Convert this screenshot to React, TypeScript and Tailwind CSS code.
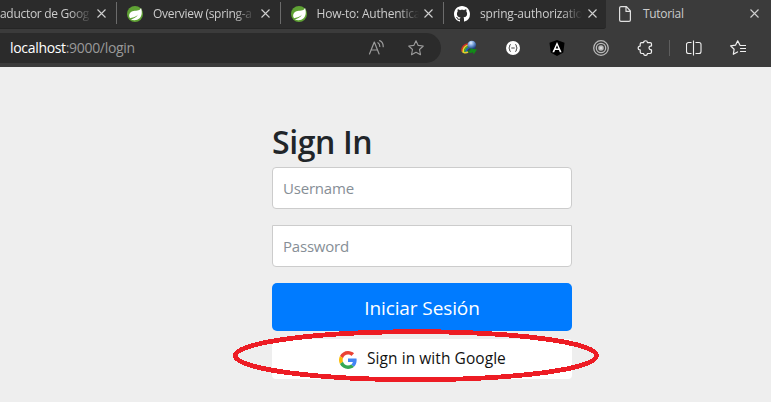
import type { ReactNode } from 'react';

const Close = () => (
  <svg className="h-[9px] w-[9px] shrink-0" viewBox="0 0 9 9" fill="none" stroke="#cfcfcf" strokeWidth="1.1">
    <path d="M.5 .5 8.5 8.5M8.5 .5 .5 8.5" />
  </svg>
);

const Spring = () => (
  <svg className="h-4 w-4" viewBox="0 0 16 16">
    <circle cx="8" cy="8" r="8" fill="#5fa134" />
    <path
      d="M14 2c-.5 1.3-1.300 2-2.600 2.300C8.500 5 4.500 4.600 2.700 7.600c-.9 1.500-.7 3.500.5 4.700C5 11.800 8.500 11.500 11 8.600 9.600 11.500 6.500 13 3.900 13.400c2.600 1.200 6.500 1.100 8.700-1.100C15.200 9.600 15.200 5.500 14 2Z"
      fill="#fff"
    />
  </svg>
);

const GitHub = () => (
  <svg className="h-4 w-4" viewBox="0 0 16 16" fill="#fff">
    <path d="M8 0C3.580 0 0 3.580 0 8c0 3.540 2.290 6.530 5.470 7.590.4.070.55-.17.55-.38 0-.19-.01-.82-.01-1.490-2.010.37-2.530-.49-2.690-.94-.09-.23-.48-.94-.82-1.130-.28-.15-.68-.52-.01-.53.63-.01 1.080.58 1.230.82.720 1.210 1.870.87 2.330.66.070-.52.280-.87.510-1.070-1.780-.2-3.640-.89-3.640-3.950 0-.87.310-1.590.82-2.150-.08-.2-.36-1.020.08-2.120 0 0 .67-.21 2.200.82.640-.18 1.320-.27 2-.27s1.360.090 2 .27c1.530-1.040 2.200-.82 2.200-.82.440 1.100.160 1.920.080 2.120.510.560.820 1.270.820 2.150 0 3.070-1.870 3.750-3.650 3.950.290.250.540.730.540 1.480 0 1.070-.01 1.930-.01 2.200 0 .210.150.460.550.380A8.010 8.010 0 0 0 16 8c0-4.420-3.580-8-8-8Z" />
  </svg>
);

const Page = () => (
  <svg className="h-4 w-3" viewBox="0 0 12 16" fill="none" stroke="#e0e0e0" strokeWidth="1.2" strokeLinejoin="round">
    <path d="M2 .6h5.500L11.400 5v9a1.400 1.400 0 0 1-1.400 1.400H2A1.400 1.400 0 0 1 .6 14V2A1.400 1.400 0 0 1 2 .6ZM7 .6V5.400h4.400" />
  </svg>
);

function Tab({ icon, title, track }: { icon: ReactNode; title: string; track: string }) {
  return (
    <div className="flex h-[27px] w-[163.5px] shrink-0 items-center border-l border-[#6b6b6b] pl-[10px] [border-image:linear-gradient(to_bottom,transparent_3px,#6b6b6b_3px,#6b6b6b_23px,transparent_23px)_1]">
      <div className="flex w-[26px] shrink-0">{icon}</div>
      <div
        className={`w-[107.5px] shrink-0 whitespace-nowrap text-[12px] leading-4 text-[#cccccc] [mask-image:linear-gradient(to_right,#000_82px,transparent_102px)] ${track}`}
      >
        {title}
      </div>
      <div className="flex">
        <Close />
      </div>
    </div>
  );
}

const Star = () => (
  <svg className="h-4 w-4" viewBox="0 0 16 16" fill="none" stroke="#9b9b9b" strokeWidth="1.1" strokeLinejoin="round">
    <path d="m8 .7 2.200 4.700 5.100.6-3.800 3.500 1 5.200L8 12.200l-4.500 2.500 1-5.200L.7 6l5.100-.6Z" />
  </svg>
);

const ReadAloud = () => (
  <svg className="h-4 w-4" viewBox="0 0 16 16" fill="none" stroke="#9b9b9b" strokeWidth="1.200" strokeLinecap="round" strokeLinejoin="round">
    <path d="M1.500 14 6.300 2 11.100 14M3.200 10h6.200M9.900 2.700C11.200 3.500 11.800 4.900 11.800 6.500M11.700.6C14.200 1.700 15.300 4.100 15.200 6.700" />
  </svg>
);

const Globe = () => (
  <svg className="h-4 w-4" viewBox="0 0 16 16">
    <defs>
      <radialGradient id="globe" cx=".4" cy=".25" r=".7">
        <stop offset="0" stopColor="#e5f2ff" />
        <stop offset=".45" stopColor="#7aa3dd" />
        <stop offset="1" stopColor="#1c3f7c" />
      </radialGradient>
    </defs>
    <path d="M1 11.500C.3 7.200 3.300 4.100 7 4" stroke="#d33224" strokeWidth="1.500" fill="none" />
    <path d="M2.500 12.500C1.400 8.500 4.200 5.400 7.600 5.300" stroke="#f0d72a" strokeWidth="1.600" fill="none" />
    <path d="M4.200 13C3 10 5 7 8 6.800" stroke="#3cae3b" strokeWidth="1.600" fill="none" />
    <path d="M5.700 12.500C5 10.500 6 8.500 8 8.200" stroke="#1c61c9" strokeWidth="1.600" fill="none" />
    <path d="M.5 11.300c1.500 2.300 4.300 3 7 1.500l-1-1.600c-1.700 1-3.700.8-6 .1Z" fill="#e0cf2c" />
    <circle cx="10.800" cy="5.100" r="4.400" fill="url(#globe)" />
    <path d="M6.500 10.500c1.600.5 2.700 0 3.300-.8L8.300 8.200l7.700 1.400-3.300 4.800-.8-2.200c-2 1.300-4.400.8-5.400-1.700Z" fill="#128a18" />
  </svg>
);

const Braces = () => (
  <svg className="h-[14px] w-[14px]" viewBox="0 0 14 14" fill="none">
    <circle cx="7" cy="7" r="7" fill="#fff" />
    <path d="M5 3.700H4.500Q3.600 3.700 3.600 4.600V6L2.800 7l.8 1v1.400q0 .9.900.9H5M9 3.700h.5q.9 0 .9.900V6l.8 1-.8 1v1.400q0 .9-.9.900H9M5.300 7h3.400" stroke="#333" strokeWidth=".9" />
  </svg>
);

const Angular = () => (
  <svg className="h-4 w-4" viewBox="0 0 16 16">
    <path d="m8 0 7.500 2.700-1.200 9.800L8 16l-6.300-3.500L.5 2.700Z" fill="#000" />
    <path d="M8 2 3.400 12.300h1.800L6.100 10h3.800l.9 2.300h1.800ZM8 5.300 9.300 8.500H6.700Z" fill="#fff" fillRule="evenodd" />
  </svg>
);

const Target = () => (
  <svg className="h-4 w-4" viewBox="0 0 16 16" fill="none" stroke="#b9b9b9" strokeWidth="1.300">
    <circle cx="8" cy="8" r="7.300" />
    <circle cx="8" cy="8" r="4.700" />
    <circle cx="8" cy="8" r="2.100" fill="#d8d8d8" />
  </svg>
);

const Puzzle = () => (
  <svg className="h-4 w-4" viewBox="0 0 16 16" fill="none" stroke="#f0f0f0" strokeWidth="1.200" strokeLinejoin="round">
    <path d="M3.200 4Q3.200 2.600 4.600 2.600h2C6.600.1 10.400.1 10.400 2.600h2.700Q14.500 2.600 14.500 4v1.900c-3.300-.2-3.300 4.100 0 3.900v2.300Q14.500 13.500 13.100 13.500h-2.700c0 2.600-3.800 2.600-3.800 0h-2q-1.400 0-1.400-1.400V9.900C.5 9.900.5 6.100 3.200 6.100Z" />
  </svg>
);

const Split = () => (
  <svg className="h-4 w-4" viewBox="0 0 16 16" fill="none" stroke="#f0f0f0" strokeWidth="1.100">
    <path d="M5.500 2.500H2.500a2 2 0 0 0-2 2v7a2 2 0 0 0 2 2h3M9.500 2.500h3.500a2 2 0 0 1 2 2v7a2 2 0 0 1-2 2H9.500M7.500 .5v15" />
  </svg>
);

const Favorites = () => (
  <svg className="h-4 w-4" viewBox="0 0 16 16" fill="none" stroke="#f0f0f0" strokeWidth="1.200" strokeLinecap="round" strokeLinejoin="round">
    <path d="M10 5.300 7.700.8 5.500 5.200.6 5.900l3.500 3.400-.8 5 4.200-2.400M10.500 5.500h5M10.500 8.500h5M10.500 11.500h5" />
  </svg>
);

const Google = () => (
  <svg className="h-[18px] w-[18px]" viewBox="0 0 48 48">
    <path fill="#ea4335" d="M24 9.500c3.540 0 6.710 1.220 9.210 3.600l6.850-6.850C35.900 2.380 30.470 0 24 0 14.620 0 6.510 5.380 2.560 13.220l7.980 6.190C12.430 13.720 17.740 9.500 24 9.500Z" />
    <path fill="#4285f4" d="M46.980 24.550c0-1.570-.15-3.090-.38-4.550H24v9.020h12.940c-.58 2.960-2.260 5.480-4.780 7.180l7.730 6c4.510-4.180 7.090-10.360 7.090-17.650Z" />
    <path fill="#fbbc05" d="M10.530 28.590A14.500 14.500 0 0 1 9.770 24c0-1.600.27-3.140.76-4.590l-7.980-6.190A23.900 23.900 0 0 0 0 24c0 3.880.92 7.540 2.560 10.780Z" />
    <path fill="#34a853" d="M24 48c6.480 0 11.930-2.130 15.890-5.810l-7.730-6c-2.150 1.450-4.920 2.300-8.160 2.300-6.260 0-11.570-4.220-13.470-9.910l-7.980 6.190C6.510 42.620 14.620 48 24 48Z" />
  </svg>
);

export default function App() {
  return (
    <div className="relative flex h-[402px] w-[771px] flex-col overflow-hidden bg-[#eeeeee] font-['Open_Sans','Noto_Sans',sans-serif]">
      <header className="bg-[#3b3b3b]">
        <div className="flex h-[29px] items-stretch">
          <div className="flex w-[606px] overflow-hidden rounded-br-[3px] border-b border-[#252525] bg-[#2b2b2b]">
            <div className="flex h-[27px] w-[116px] shrink-0 items-center">
              <div className="w-[97px] whitespace-nowrap text-[12px] leading-4 tracking-[-0.3px] text-[#cccccc] [mask-image:linear-gradient(to_right,#000_70px,transparent_92px)]">
                aductor de Goog
              </div>
              <div className="flex"><Close /></div>
            </div>
            <Tab icon={<Spring />} title="Overview (spring-a" track="tracking-[-0.3px]" />
            <Tab icon={<Spring />} title="How-to: Authentica" track="tracking-[-0.2px]" />
            <Tab icon={<GitHub />} title="spring-authorizatio" track="tracking-[-0.2px]" />
          </div>
          <div className="flex h-[27px] flex-1 items-center pl-[13px]">
            <Page />
            <span className="ml-3 w-[107px] text-[12px] leading-4 tracking-[-0.3px] text-[#cccccc]">Tutorial</span>
            <Close />
          </div>
        </div>
        <div className="flex h-[38px] items-start pt-1">
          <div className="flex h-[30px] w-[441px] items-center rounded-r-full bg-[#2b2b2b] pl-[10px]">
            <div className="w-[358px] text-[14px] leading-5 tracking-[-0.32px] text-[#999999]">
              <span className="text-white">localhost</span>:9000/login
            </div>
            <ReadAloud />
            <div className="ml-[24px]"><Star /></div>
          </div>
          <div className="flex h-[30px] flex-1 items-center">
            <div className="ml-[20px]"><Globe /></div>
            <div className="ml-[29px]"><Braces /></div>
            <div className="ml-[29px]"><Angular /></div>
            <div className="ml-[28px]"><Target /></div>
            <div className="ml-[28px]"><Puzzle /></div>
            <div className="ml-[16px] h-4 w-px bg-[#5e5e5e]" />
            <div className="ml-[16px]"><Split /></div>
            <div className="ml-[28px]"><Favorites /></div>
          </div>
        </div>
      </header>
      <main className="ml-[272px] flex w-[300px] flex-col pt-[56px]">
        <h1 className="mb-[6px] h-[38px] text-[32px] leading-[38px] font-semibold tracking-[-0.4px] text-[#212529]">Sign In</h1>
        <input
          placeholder="Username"
          className="mb-4 h-[42px] rounded-[4px] border border-[#cccccc] bg-white px-[10px] text-[15px] tracking-[-0.2px] placeholder:text-[#868e96]"
        />
        <input
          placeholder="Password"
          className="mb-4 h-[42px] rounded-b-[4px] border border-[#cccccc] bg-white px-[10px] text-[15px] tracking-[-0.2px] placeholder:text-[#868e96]"
        />
        <button className="mb-2 h-12 rounded-[5px] bg-[#007bff] pt-[2px] text-[19px] tracking-[-0.1px] text-white">Iniciar Sesión</button>
        <button className="flex h-10 items-center rounded-[4px] bg-white pl-[67px] text-[15.5px] text-[#111111]">
          <span className="mt-[2px]"><Google /></span>
          <span className="ml-[10px] whitespace-nowrap tracking-[0.06px]">Sign in with Google</span>
        </button>
      </main>
      <svg className="pointer-events-none absolute inset-0 h-[402px] w-[771px]" viewBox="0 0 771 402" shapeRendering="crispEdges">
        <ellipse cx="416" cy="355.7" rx="180.600" ry="24" fill="none" stroke="#ed1c24" strokeWidth="4.800" />
      </svg>
    </div>
  );
}
